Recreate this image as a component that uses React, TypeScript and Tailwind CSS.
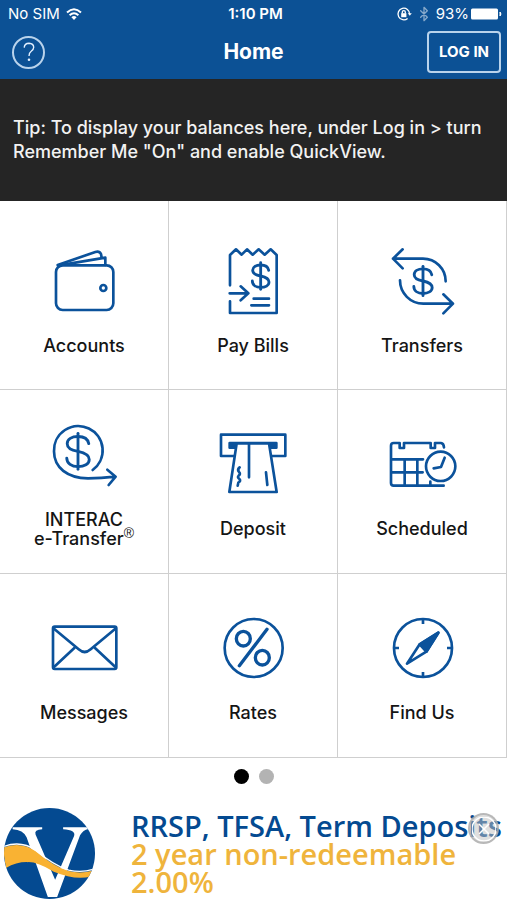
import type { ReactNode } from 'react';
import { Bluetooth } from 'lucide-react';

function TileIcon({ children }: { children: ReactNode }) {
  return (
    <svg
      className="size-[72px] shrink-0 overflow-visible"
      viewBox="0 0 216 216"
      fill="none"
      stroke="#0b529b"
      strokeWidth={8}
      strokeLinecap="round"
      strokeLinejoin="round"
      aria-hidden="true"
    >
      {children}
    </svg>
  );
}

function Dollar({ x, y, scale }: { x: number; y: number; scale: number }) {
  return (
    <g transform={`translate(${x} ${y}) scale(${scale})`} strokeWidth={8.5 / scale}>
      <path d="M24 -17C22 -28 12 -33 0 -33C-14 -33 -24 -27 -24 -17C-24 -5 -12 -2 0 0C14 3 25 7 25 18C25 28 14 34 0 34C-14 34 -25 27 -25 15" />
      <path d="M0 -40V40" />
    </g>
  );
}

const tiles: { label: ReactNode; icon: ReactNode }[] = [
  {
    label: 'Accounts',
    icon: (
      <>
        <rect x="24" y="61" width="172" height="134" rx="20" />
        <path d="M29 60L142 21Q154 17 159 27L161 38" />
        <path d="M33 61L172 38V60" />
        <circle cx="166" cy="129" r="9" />
      </>
    ),
  },
  {
    label: 'Pay Bills',
    icon: (
      <>
        <path d="M39 121V30L57 13L74 29L90 13L107 29L125 13L143 29L161 13L179 30V204H39V169" />
        <path d="M38 145H94M71 124L94 145L71 166M110 161H156M103 181H156" />
        <Dollar x={131} y={93} scale={1} />
      </>
    ),
  },
  {
    label: 'Transfers',
    icon: (
      <>
        <path d="M21 41H111A68 68 0 0 1 179 109M50 13L21 41L50 70" />
        <path d="M42 106A70 70 0 0 0 112 176H201M172 148L201 176L172 205" />
        <Dollar x={111} y={108} scale={1.1} />
      </>
    ),
  },
  {
    label: (
      <>
        INTERAC
        <br />
        e-Transfer<sup className="font-['Liberation_Sans',sans-serif] text-sm leading-none">®</sup>
      </>
    ),
    icon: (
      <>
        <path d="M134 147A73 73 0 1 0 18 91C18 140 58 171 120 172C152 172 176 170 202 167M178 146L203 167L182 192" />
        <Dollar x={90} y={91} scale={1.35} />
      </>
    ),
  },
  {
    label: 'Deposit',
    icon: (
      <>
        <path d="M52 84H12V20H205V84H164" />
        <rect x="38" y="45" width="140" height="14" fill="#0b529b" />
        <path d="M59 46H156L179 192H37Z" fill="#fff" />
        <path d="M96 48V148M147 133L151 171" />
        <path d="M68 118Q60 125 66 132Q72 138 65 143Q60 148 67 153Q73 159 64 164L62 173" />
      </>
    ),
  },
  {
    label: 'Scheduled',
    icon: (
      <>
        <path d="M173 173H23Q15 173 15 165V53Q15 45 23 45H41V60H54V45H134V60H147V45H165Q173 46 174 58" />
        <path d="M16 94H111M16 133H110M56 94V172M94 94V172M133 161V172" />
        <circle cx="164" cy="115" r="44" />
        <path d="M176 89L165 117L143 121" />
      </>
    ),
  },
  {
    label: 'Messages',
    icon: (
      <>
        <rect x="15" y="44" width="190" height="127" rx="5" />
        <path d="M18 50L92 112Q110 128 128 112L202 50M18 165L79 108M202 165L141 108" />
      </>
    ),
  },
  {
    label: 'Rates',
    icon: (
      <>
        <circle cx="110" cy="108" r="87" />
        <g strokeWidth={10}>
          <ellipse cx="79" cy="80" rx="21" ry="22" />
          <ellipse cx="136" cy="137" rx="21" ry="22" />
          <path d="M150 52L67 161" />
        </g>
      </>
    ),
  },
  {
    label: 'Find Us',
    icon: (
      <>
        <circle cx="111" cy="108" r="87" />
        <path d="M111 21V36M111 180V195M24 108H39M183 108H198" strokeLinecap="butt" />
        <path d="M157 62L101 97L63 155L121 119Z" />
        <path d="M157 62L101 97L121 119Z" fill="#0b529b" />
      </>
    ),
  },
];

function StatusBar() {
  return (
    <div className="grid grid-cols-[1fr_auto_1fr] items-center pt-1 pr-1 pl-2 text-[15px] leading-5">
      <div className="flex items-center gap-1.5">
        <span>No SIM</span>
        <svg className="h-3 w-4" viewBox="0 0 16 12" fill="none" stroke="#fff" strokeWidth={2} aria-label="Wi-Fi">
          <path d="M1 4.4Q8 -2 15 4.4M3.6 7.2Q8 3.2 12.4 7.2" />
          <path d="M5.4 9.2Q8 7 10.6 9.2L8 12Z" fill="#fff" stroke="none" />
        </svg>
      </div>
      <div className="text-center font-semibold">1:10 PM</div>
      <div className="flex items-center justify-end">
        <svg className="mr-1 size-4" viewBox="0 0 16 16" fill="none" stroke="#fff" strokeWidth={1.3} aria-label="Rotation lock">
          <path d="M13.6 8A5.8 5.8 0 1 0 11.6 12.4" />
          <path d="M11.8 7.2H15.8L13.8 9.8Z" fill="#fff" stroke="none" />
          <rect x="5.2" y="7.2" width="5.2" height="4" fill="#fff" stroke="none" />
          <path d="M6.3 7.4V6Q6.3 4.6 7.8 4.6Q9.3 4.6 9.3 6V7.4" />
        </svg>
        <Bluetooth className="mr-1 h-4 w-4 opacity-50" strokeWidth={2} />
        <span>93%</span>
        <svg className="ml-0.5 h-3 w-8" viewBox="0 0 32 12" fill="#fff" aria-label="Battery">
          <rect x="0" y="0.5" width="27" height="11" rx="1.5" />
          <path d="M29 4Q31 6 29 8Z" stroke="#fff" />
        </svg>
      </div>
    </div>
  );
}

function Logo() {
  return (
    <svg className="size-[91px] shrink-0" viewBox="0 0 274 274" role="img" aria-label="Logo">
      <defs>
        <clipPath id="disc">
          <circle cx="137" cy="137" r="137" />
        </clipPath>
      </defs>
      <g clipPath="url(#disc)">
        <rect width="274" height="274" fill="#044a91" />
        <path
          d="M26 58H115V64Q90 65 95 80L154 216L211 84Q217 66 178 64V58H254V63Q238 66 229 82L160 268H132L68 88Q58 66 26 64Z"
          fill="#fff"
        />
        <path
          d="M-4 120Q50 98 95 130Q150 176 195 190Q232 199 268 188L262 206Q215 219 150 192Q100 162 72 163Q38 162 6 181Z"
          fill="#f9b233"
        />
        <path d="M-4 117Q50 96 96 127Q150 173 195 187Q232 196 268 185" fill="none" stroke="#fff" strokeWidth={4} />
      </g>
    </svg>
  );
}

export default function App() {
  return (
    <div className="w-full overflow-hidden bg-white font-['Inter','Liberation_Sans',sans-serif] text-[#151515]">
      <header className="bg-[#0c5195] text-white">
        <StatusBar />
        <nav className="grid grid-cols-[1fr_auto_1fr] items-center px-1.5 pt-[7px] pb-1.5">
          <button
            aria-label="Help"
            className="ml-1.5 flex size-[33px] items-center justify-center rounded-full border-2 border-[#b9d3ec]"
          >
            <svg className="h-5 w-3" viewBox="0 0 12 20" fill="none" stroke="#e3f0ff" strokeWidth={1.4} aria-hidden="true">
              <path d="M1.2 5.6Q1.6 1.2 6 1.2Q10.6 1.4 10.7 5.2Q10.7 7.4 8.2 9.2Q6 10.8 6 14" />
              <circle cx="6" cy="17.8" r="1.3" fill="#e3f0ff" stroke="none" />
            </svg>
          </button>
          <h1 className="text-[21px] leading-7 font-bold">Home</h1>
          <button className="h-[42px] w-[74px] justify-self-end rounded border-2 border-[#b9d3ec] text-[15px] font-bold">
            LOG IN
          </button>
        </nav>
      </header>

      <section className="bg-[#252525] px-[13px] py-[37px] text-lg leading-6 font-medium text-[#f2f2f2]">
        Tip: To display your balances here, under Log in &gt; turn Remember Me "On" and enable QuickView.
      </section>

      <main className="grid grid-cols-3">
        {tiles.map((tile, i) => (
          <button
            key={i}
            className={`flex flex-col items-center justify-center gap-[17px] border-r border-b border-[#cfcfcf] ${
              i < 3 ? 'min-h-[189px] pt-[13px]' : 'min-h-[184px] pt-[5px]'
            }`}
          >
            <TileIcon>{tile.icon}</TileIcon>
            <span className={`text-lg font-medium ${i === 3 ? 'leading-[19px]' : 'leading-6'}`}>{tile.label}</span>
          </button>
        ))}
      </main>

      <div className="flex justify-center gap-2.5 pt-[11px]">
        <span className="size-[15px] rounded-full bg-black" />
        <span className="size-[15px] rounded-full bg-[#b3b3b3]" />
      </div>

      <aside className="relative flex items-start gap-9 pt-6 pl-1">
        <Logo />
        <a
          href="#rates"
          className="pt-1 font-['Open_Sans','Noto_Sans',sans-serif] text-[29px] leading-7 font-semibold whitespace-nowrap text-[#efb43c]"
        >
          <span className="block text-[#044a91]">RRSP, TFSA, Term Deposits</span>
          <span className="block">2 year non-redeemable</span>
          <span className="block">2.00%</span>
        </a>
        <button
          aria-label="Close"
          className="absolute top-[29px] right-2 flex size-[31px] items-center justify-center rounded-full border-2 border-[#a8a8a8]/70 bg-[#c0c0c0]/50"
        >
          <svg className="size-6" viewBox="0 0 24 24" fill="none" stroke="#fff" strokeWidth={1.5} aria-hidden="true">
            <circle cx="12" cy="12" r="12" />
            <path d="M7 7L17 17M17 7L7 17" />
          </svg>
        </button>
      </aside>
    </div>
  );
}
